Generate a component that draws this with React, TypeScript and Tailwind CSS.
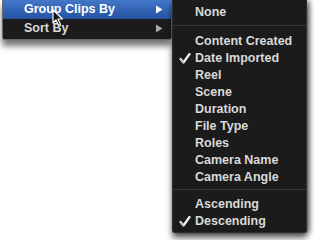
import React from 'react';

const font = { fontFamily: '"Liberation Sans", Arial, sans-serif' };

function Arrow({ color }: { color: string }) {
  return (
    <svg width="8" height="9" viewBox="0 0 8 9" className="shrink-0">
      <path d="M1 0.5 L7.5 4.5 L1 8.5 Z" fill={color} />
    </svg>
  );
}

function Check() {
  return (
    <svg width="12" height="11" viewBox="0 0 12 11">
      <path d="M1.5 6 L4.5 9.5 L10.5 1" fill="none" stroke="#f2f2f2" strokeWidth="2.2" strokeLinecap="round" strokeLinejoin="round" />
      <path d="M1.8 6.6 L4.3 9.3" fill="none" stroke="#6aa0e8" strokeWidth="1" strokeLinecap="round" />
    </svg>
  );
}

function Cursor() {
  return (
    <svg width="12" height="18" viewBox="0 0 12 18" className="absolute left-[52px] top-[9px]">
      <path d="M1 1 L1 14 L4 11 L6.5 16.5 L8.5 15.5 L6 10 L10.5 10 Z" fill="#111" stroke="#fff" strokeWidth="1.2" strokeLinejoin="round" />
    </svg>
  );
}

const groupItems: { label: string; checked?: boolean }[] = [
  { label: 'Content Created' },
  { label: 'Date Imported', checked: true },
  { label: 'Reel' },
  { label: 'Scene' },
  { label: 'Duration' },
  { label: 'File Type' },
  { label: 'Roles' },
  { label: 'Camera Name' },
  { label: 'Camera Angle' },
];

function Item({ label, checked }: { label: string; checked?: boolean }) {
  return (
    <div className="h-[17px] flex items-center">
      <div className="w-[22px] flex justify-center pl-[2px]">{checked && <Check />}</div>
      <span className="text-[12.5px] font-bold text-[#d9d9d9] leading-none">{label}</span>
    </div>
  );
}

export default function App() {
  return (
    <div className="relative w-[317px] h-[240px] bg-white overflow-hidden" style={font}>
      <div className="flex items-start pl-[2px]">
        {/* Main menu */}
        <div className="w-[170px] bg-[#1b1b1b] border-x border-b border-[#6a6a6a] rounded-b-[3px] pb-[2px] shadow-[0_6px_6px_rgba(0,0,0,0.55)]">
          <div className="h-[19px] flex items-center justify-between pl-[21px] pr-[8px] bg-gradient-to-b from-[#4477c8] to-[#2453a3]">
            <span className="text-[12.5px] font-bold text-white leading-none">Group Clips By</span>
            <Arrow color="#ffffff" />
          </div>
          <div className="h-[18px] flex items-center justify-between pl-[21px] pr-[8px]">
            <span className="text-[12.5px] font-bold text-[#d9d9d9] leading-none">Sort By</span>
            <Arrow color="#a8a8a8" />
          </div>
        </div>

        {/* Submenu */}
        <div className="w-[135px] bg-[#1b1b1b] border-x border-b border-[#2c2c2c] rounded-b-[3px] pt-[4px] pb-[2px] shadow-[0_5px_6px_rgba(0,0,0,0.6),3px_0_5px_rgba(0,0,0,0.45)]">
          <Item label="None" />
          <div className="h-[12px] pt-[4px]">
            <div className="h-px bg-[#383838]" />
          </div>
          {groupItems.map((it) => (
            <Item key={it.label} label={it.label} checked={it.checked} />
          ))}
          <div className="h-[10px] pt-[3px]">
            <div className="h-px bg-[#383838]" />
          </div>
          <Item label="Ascending" />
          <Item label="Descending" checked />
        </div>
      </div>
      <Cursor />
    </div>
  );
}
